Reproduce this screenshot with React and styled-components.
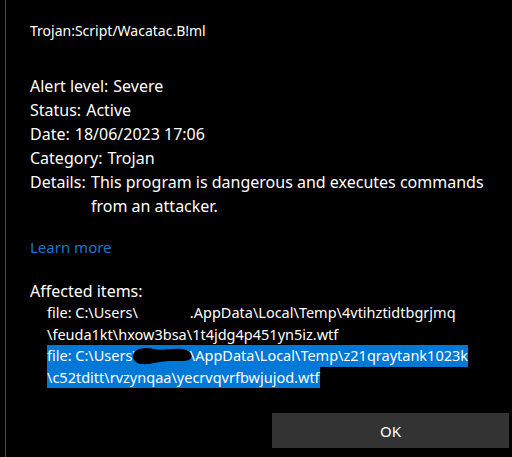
import React from 'react';
import styled, { createGlobalStyle } from 'styled-components';

const Global = createGlobalStyle`
    html, body {
        margin: 0;
        padding: 0;
        background: #000;
    }
    body {
        width: 512px;
        height: 457px;
        overflow: hidden;
        font-family: "Noto Sans", "Open Sans", sans-serif;
        color: #fff;
    }
`;

const Frame = styled.div`
    height: 457px;
    margin-left: 5px;
    border-left: 1px solid #4d4d4d;
    padding-left: 24px;
    padding-right: 16px;
    display: flex;
    flex-direction: column;
    box-sizing: border-box;
`;

const Title = styled.div`
    margin-top: 20px;
    font-size: 14px;
    line-height: 22px;
`;

const Facts = styled.div`
    margin-top: 32px;
    display: flex;
    flex-direction: column;
    font-size: 16px;
    line-height: 24px;
`;

const Fact = styled.div`
    display: grid;
    grid-template-columns: ${props => props.hanging ? '61px 1fr' : 'auto 1fr'};
    column-gap: ${props => props.hanging ? '0' : '5px'};
    justify-content: start;
`;

const LearnMore = styled.a`
    margin-top: 17px;
    font-size: 15px;
    line-height: 24px;
    color: #1a75cf;
    text-decoration: none;
    align-self: flex-start;
`;

const Heading = styled.div`
    margin-top: 21px;
    font-size: 16px;
    line-height: 22px;
`;

const Files = styled.div`
    display: flex;
    flex-direction: column;
    padding-left: 17px;
    font-size: 14.5px;
    line-height: 21.5px;
`;

const FileRow = styled.div`
    display: flex;
`;

const Line = styled.span`
    white-space: pre;
    background: ${props => props.selected ? '#0078d7' : 'transparent'};
`;

const Redacted = styled.span`
    position: relative;
    display: inline-block;
    width: 52px;
    height: 21.5px;
    vertical-align: top;

    svg {
        position: absolute;
        left: -6px;
        top: 1px;
    }
`;

const Footer = styled.div`
    margin-top: auto;
    margin-bottom: 9px;
    margin-right: -13px;
    display: flex;
    justify-content: flex-end;
`;

const Button = styled.button`
    width: 237px;
    height: 35px;
    border: none;
    background: #333333;
    color: #fff;
    font-family: inherit;
    font-size: 15px;
    padding: 0;
`;

const Blot = () => (
    <svg width="62" height="20" viewBox="0 0 62 20">
        <path d="M2 7 C5 2 14 1 22 3 C30 5 40 2 50 3 C57 4 61 8 59 12 C57 16 48 15 38 15 C28 15 18 19 9 18 C3 17 -1 12 2 7 Z" fill="#000" />
    </svg>
);

export default function App() {
    return (
        <>
            <Global />
            <Frame>
                <Title>Trojan:Script/Wacatac.B!ml</Title>
                <Facts>
                    <Fact><span>Alert level:</span><span>Severe</span></Fact>
                    <Fact><span>Status:</span><span>Active</span></Fact>
                    <Fact><span>Date:</span><span>18/06/2023 17:06</span></Fact>
                    <Fact><span>Category:</span><span>Trojan</span></Fact>
                    <Fact hanging><span>Details:</span><span>This program is dangerous and executes commands from an attacker.</span></Fact>
                </Facts>
                <LearnMore href="#">Learn more</LearnMore>
                <Heading>Affected items:</Heading>
                <Files>
                    <FileRow><Line>file: C:\Users\<Redacted />.AppData\Local\Temp\4vtihztidtbgrjmq</Line></FileRow>
                    <FileRow><Line>\feuda1kt\hxow3bsa\1t4jdg4p451yn5iz.wtf</Line></FileRow>
                    <FileRow><Line selected>file: C:\Users\<Redacted><Blot /></Redacted>\AppData\Local\Temp\z21qraytank1023k</Line></FileRow>
                    <FileRow><Line selected>\c52tditt\rvzynqaa\yecrvqvrfbwjujod.wtf</Line></FileRow>
                </Files>
                <Footer>
                    <Button>OK</Button>
                </Footer>
            </Frame>
        </>
    );
}
